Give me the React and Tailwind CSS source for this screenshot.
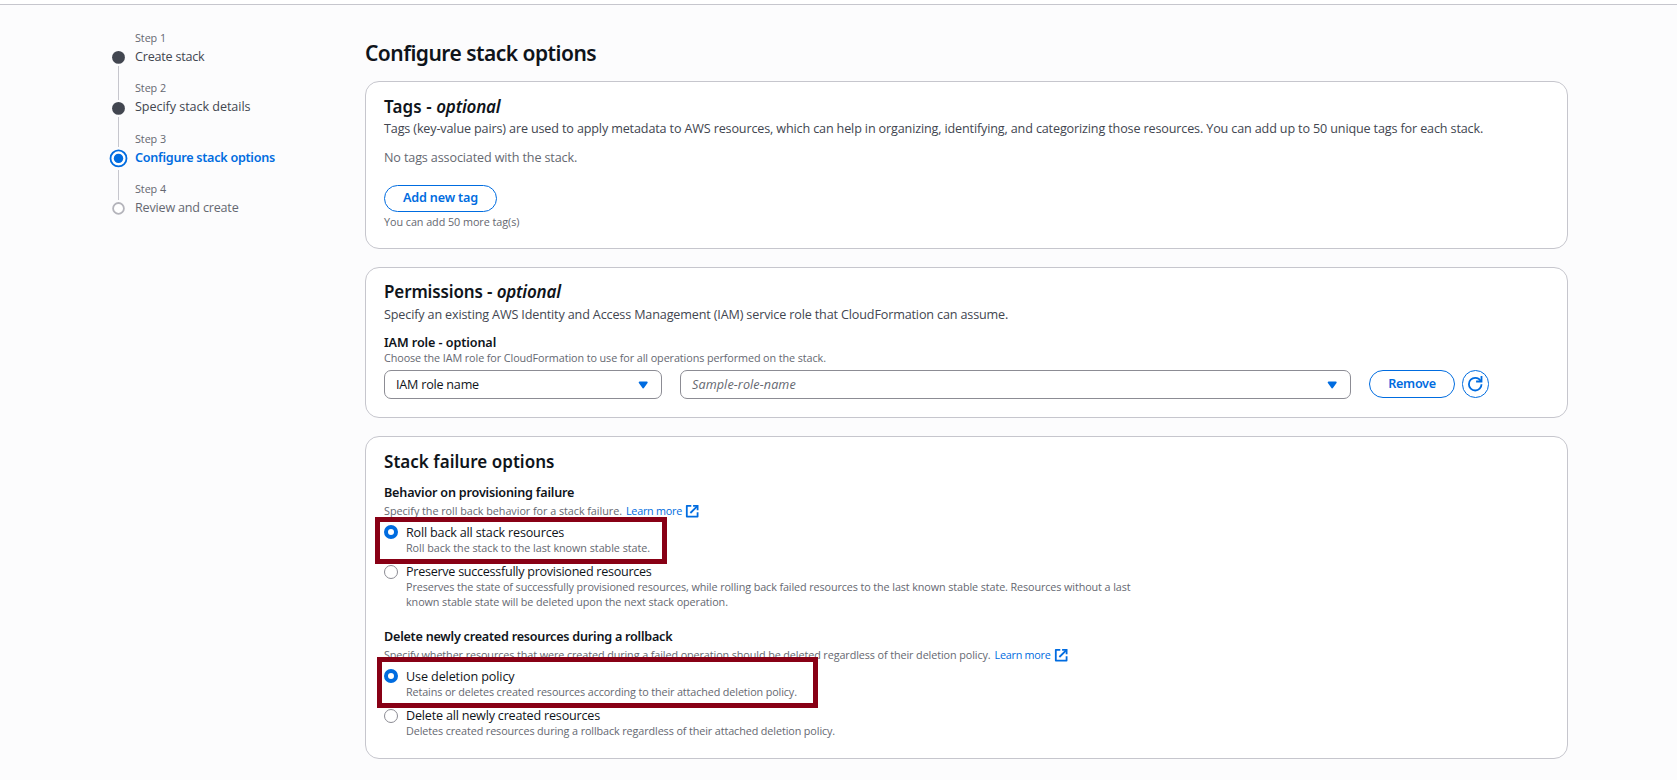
function Refresh() {
  return (
    <svg className="h-[14.4px] w-[14.4px] overflow-visible" viewBox="0 0 16 16" fill="none" stroke="#006ce0" strokeWidth="2">
      <path d="M10 5h5V0" strokeLinecap="square" />
      <path d="M15 8a6.957 6.957 0 0 1-7 7 6.957 6.957 0 0 1-7-7 6.957 6.957 0 0 1 7-7 6.87 6.87 0 0 1 6.3 4" />
    </svg>
  );
}

function External() {
  return (
    <svg className="ml-[3px] mt-[2px] h-[14.4px] w-[14.4px] shrink-0" viewBox="0 0 16 16" fill="none" stroke="#006ce0" strokeWidth="2">
      <path d="M10 2h4v4" strokeLinecap="square" />
      <path d="m6 10 8-8" />
      <path d="M14 9.048V14H2V2h5" strokeLinejoin="round" />
    </svg>
  );
}

function Caret() {
  return (
    <svg className="mt-px h-[14.4px] w-[14.4px]" viewBox="0 0 16 16" fill="#006ce0" stroke="#006ce0" strokeWidth="2" strokeLinejoin="round">
      <path d="M4 5h8l-4 5.5-4-5.5z" />
    </svg>
  );
}

function Marker({ kind }) {
  return (
    <svg className="h-[19px] w-[19px] shrink-0" viewBox="0 0 19 19">
      {kind === "done" && <circle cx="9.5" cy="9.4" r="6.4" fill="#424650" />}
      {kind === "active" && (
        <>
          <circle cx="9.5" cy="9.4" r="8" fill="#fff" stroke="#006ce0" strokeWidth="1.8" />
          <circle cx="9.5" cy="9.4" r="4.7" fill="#006ce0" />
        </>
      )}
      {kind === "todo" && <circle cx="9.5" cy="9.4" r="5.4" fill="#fff" stroke="#b4b4bb" strokeWidth="1.8" />}
    </svg>
  );
}

function Radio({ checked, label, track, children }) {
  return (
    <div className="flex gap-[8px]">
      {checked ? (
        <span className="mt-px h-[14px] w-[14px] shrink-0 rounded-full border-4 border-[#006ce0] bg-white" />
      ) : (
        <span className="mt-[2px] h-[14px] w-[14px] shrink-0 rounded-full border border-[#8c8c94] bg-white" />
      )}
      <div>
        <div className={"text-[12.6px] leading-[17px] text-[#0f141a] " + track}>{label}</div>
        <div className="-mt-px text-[10.8px] leading-[15px] text-[#656871]">{children}</div>
      </div>
    </div>
  );
}

function Step({ n, label, className }) {
  return (
    <div>
      <div className="text-[10.8px] leading-[15px] tracking-[-0.07px] text-[#656871]">Step {n}</div>
      <div className={"mt-[3px] text-[12.6px] leading-[17px] " + className}>{label}</div>
    </div>
  );
}

const semibold = "font-['Noto_Sans','Open_Sans',sans-serif] font-semibold ";
const card = "relative rounded-[14px] border border-[#c6c6cd] bg-white px-[18px] ";
const h2 = semibold + "text-[17px] leading-[23px] text-[#0f141a] ";
const label = semibold + "text-[12.6px] leading-[17px] text-[#0f141a] ";
const hint = "text-[10.8px] leading-[15px] text-[#656871] ";
const desc = "text-[12.6px] leading-[17px] text-[#424650] ";
const button =
  semibold +
  "flex items-center justify-center rounded-full border-[1.5px] border-[#006ce0] text-[12.6px] leading-[17px] text-[#006ce0] ";
const select = "flex h-[29px] items-center justify-between rounded-[7px] border border-[#8c8c94] pl-[11px] text-[12.6px] leading-[17px] ";

export default function App() {
  return (
    <div className="h-[780px] w-[1677px] overflow-hidden whitespace-nowrap bg-[#fcfcfd] font-['Open_Sans','Noto_Sans',sans-serif]">
      <div className="h-[5px] border-b border-[#c6c6cd] bg-white" />
      <div className="flex">
        <nav className="ml-[109px] flex w-[256px] gap-[7px] pt-[25px]">
          <div className="flex w-[19px] flex-col items-center pt-[18px]">
            <Marker kind="done" />
            <span className="-my-px h-[34px] w-px bg-[#c6c6cd]" />
            <Marker kind="done" />
            <span className="-mt-px mb-[2px] h-[30px] w-px bg-[#c6c6cd]" />
            <Marker kind="active" />
            <span className="-mb-px mt-[2px] h-[30px] w-px bg-[#c6c6cd]" />
            <Marker kind="todo" />
          </div>
          <div className="flex flex-col">
            <Step n={1} label="Create stack" className="mb-[15px] tracking-[-0.22px] text-[#424650]" />
            <Step n={2} label="Specify stack details" className="mb-[16px] tracking-[-0.06px] text-[#424650]" />
            <Step n={3} label="Configure stack options" className={semibold + "mb-[15px] tracking-[-0.26px] text-[#006ce0]"} />
            <Step n={4} label="Review and create" className="tracking-[-0.2px] text-[#656871]" />
          </div>
        </nav>

        <main className="w-[1203px] pt-[34px]">
          <h1 className={semibold + "text-[21px] leading-[28px] tracking-[-0.53px] text-[#0f141a]"}>Configure stack options</h1>

          <section className={card + "mt-[14px] h-[168px] pt-[13px]"}>
            <h2 className={h2 + "tracking-[0.1px]"}>
              Tags - <em className="tracking-[-0.2px]">optional</em>
            </h2>
            <p className={desc + "mt-[2px] tracking-[-0.145px]"}>
              Tags (key-value pairs) are used to apply metadata to AWS resources, which can help in organizing, identifying, and categorizing those resources. You can add up to 50 unique tags for each stack.
            </p>
            <p className="mt-[12px] text-[12.6px] leading-[17px] tracking-[-0.135px] text-[#656871]">No tags associated with the stack.</p>
            <button className={button + "mt-[19px] h-[27px] w-[113px] pb-[2px] tracking-[-0.17px]"}>Add new tag</button>
            <p className={hint + "mt-[2px] tracking-[-0.05px]"}>You can add 50 more tag(s)</p>
          </section>

          <section className={card + "mt-[18px] h-[151px] pt-[12px]"}>
            <h2 className={h2 + "tracking-[-0.13px]"}>
              Permissions - <em className="tracking-[-0.2px]">optional</em>
            </h2>
            <p className={desc + "mt-[3px] tracking-[-0.147px]"}>
              Specify an existing AWS Identity and Access Management (IAM) service role that CloudFormation can assume.
            </p>
            <p className={label + "mt-[11px] tracking-[-0.08px]"}>IAM role - optional</p>
            <p className={hint + "-mt-px tracking-[-0.09px]"}>Choose the IAM role for CloudFormation to use for all operations performed on the stack.</p>
            <div className="mt-[5px] flex">
              <div className={select + "w-[278px] pr-[11px] tracking-[-0.22px] text-[#0f141a]"}>
                <span>IAM role name</span>
                <Caret />
              </div>
              <div className={select + "ml-[18px] w-[671px] pr-[11px] tracking-[0.1px] text-[#656871]"}>
                <em>Sample-role-name</em>
                <Caret />
              </div>
              <button className={button + "ml-[18px] h-[28px] w-[86px] pb-[2px] tracking-[-0.3px]"}>Remove</button>
              <button className={button + "ml-[7px] h-[28px] w-[27px]"}>
                <Refresh />
              </button>
            </div>
          </section>

          <section className={card + "mt-[18px] h-[323px] pt-[13px]"}>
            <h2 className={h2 + "tracking-[0.03px]"}>Stack failure options</h2>

            <p className={label + "mt-[11px] tracking-[-0.19px]"}>Behavior on provisioning failure</p>
            <div className={hint + "mt-[2px] flex h-[15px] items-center"}>
              <span className="tracking-[-0.04px]">Specify the roll back behavior for a stack failure.</span>
              <a className="ml-[4px] tracking-[-0.25px] text-[#006ce0]">Learn more</a>
              <External />
            </div>
            <div className="mt-[6px] flex flex-col gap-[8px]">
              <Radio checked label="Roll back all stack resources" track="tracking-[-0.18px]">
                <span className="tracking-[-0.04px]">Roll back the stack to the last known stable state.</span>
              </Radio>
              <Radio label="Preserve successfully provisioned resources" track="tracking-[-0.28px]">
                <span className="block tracking-[-0.104px]">
                  Preserves the state of successfully provisioned resources, while rolling back failed resources to the last known stable state. Resources without a last
                </span>
                <span className="block tracking-[-0.083px]">known stable state will be deleted upon the next stack operation.</span>
              </Radio>
            </div>

            <p className={label + "mt-[19px] tracking-[-0.23px]"}>Delete newly created resources during a rollback</p>
            <div className={hint + "mt-[2px] flex h-[15px] items-center"}>
              <span className="tracking-[-0.094px]">
                Specify whether resources that were created during a failed operation should be deleted regardless of their deletion policy.
              </span>
              <a className="ml-[4px] tracking-[-0.25px] text-[#006ce0]">Learn more</a>
              <External />
            </div>
            <div className="mt-[6px] flex flex-col gap-[8px]">
              <Radio checked label="Use deletion policy" track="tracking-[-0.12px]">
                <span className="tracking-[-0.12px]">Retains or deletes created resources according to their attached deletion policy.</span>
              </Radio>
              <Radio label="Delete all newly created resources" track="tracking-[-0.2px]">
                <span className="tracking-[-0.105px]">Deletes created resources during a rollback regardless of their attached deletion policy.</span>
              </Radio>
            </div>

            <div className="absolute left-[9px] top-[80px] h-[47px] w-[292px] border-[5px] border-[#880015]" />
            <div className="absolute left-[11px] top-[220px] h-[51px] w-[441px] border-[5px] border-[#880015]" />
          </section>
        </main>
      </div>
    </div>
  );
}
